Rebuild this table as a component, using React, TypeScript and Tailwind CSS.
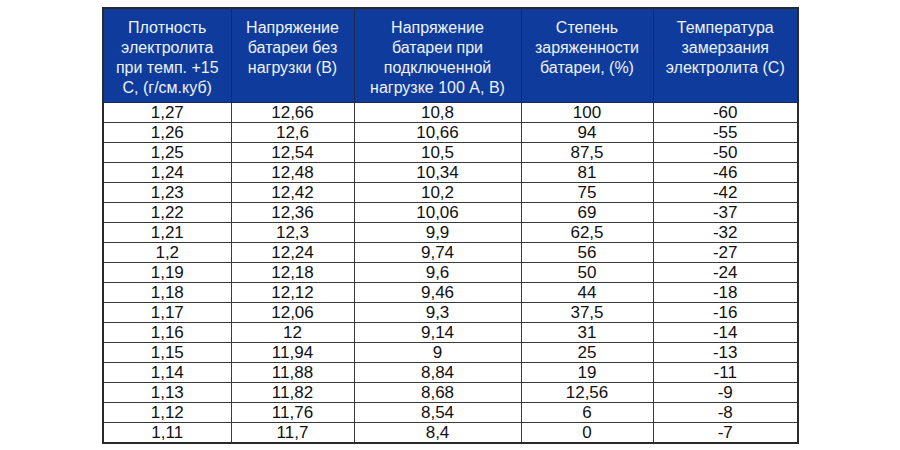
import React from "react";

const rows: string[][] = [
  ["1,27", "12,66", "10,8", "100", "-60"],
  ["1,26", "12,6", "10,66", "94", "-55"],
  ["1,25", "12,54", "10,5", "87,5", "-50"],
  ["1,24", "12,48", "10,34", "81", "-46"],
  ["1,23", "12,42", "10,2", "75", "-42"],
  ["1,22", "12,36", "10,06", "69", "-37"],
  ["1,21", "12,3", "9,9", "62,5", "-32"],
  ["1,2", "12,24", "9,74", "56", "-27"],
  ["1,19", "12,18", "9,6", "50", "-24"],
  ["1,18", "12,12", "9,46", "44", "-18"],
  ["1,17", "12,06", "9,3", "37,5", "-16"],
  ["1,16", "12", "9,14", "31", "-14"],
  ["1,15", "11,94", "9", "25", "-13"],
  ["1,14", "11,88", "8,84", "19", "-11"],
  ["1,13", "11,82", "8,68", "12,56", "-9"],
  ["1,12", "11,76", "8,54", "6", "-8"],
  ["1,11", "11,7", "8,4", "0", "-7"],
];

const headers: string[][] = [
  ["Плотность", "электролита", "при темп. +15", "С, (г/см.куб)"],
  ["Напряжение", "батареи без", "нагрузки (В)"],
  ["Напряжение", "батареи при", "подключенной", "нагрузке 100 А, В)"],
  ["Степень", "заряженности", "батареи, (%)"],
  ["Температура", "замерзания", "электролита (С)"],
];

export default function App() {
  return (
    <div className="w-[900px] h-[450px] bg-white pt-[7px]" style={{ fontFamily: '"Liberation Sans", Arial, sans-serif' }}>
      <table className="ml-[102px] w-[695px] table-fixed border-collapse border-2 border-[#2a2a2a]">
        <colgroup>
          <col className="w-[128px]" />
          <col className="w-[123px]" />
          <col className="w-[167px]" />
          <col className="w-[132px]" />
          <col className="w-[145px]" />
        </colgroup>
        <thead>
          <tr className="h-[94px] bg-[#0f3c9c]">
            {headers.map((h, i) => (
              <th
                key={i}
                className="align-top pt-[9px] px-1 text-[16px] leading-[20px] font-normal text-[#eef2fb] text-center border border-[#1b2a4f]"
              >
                {h.map((line, j) => (
                  <div key={j} className="whitespace-nowrap">{line}</div>
                ))}
              </th>
            ))}
          </tr>
        </thead>
        <tbody>
          {rows.map((r, i) => (
            <tr key={i} className="h-[20px]">
              {r.map((c, j) => (
                <td
                  key={j}
                  className="p-0 pt-[1px] text-center text-[17px] leading-[18px] text-[#111] border border-[#3a3a3a]"
                >
                  {c}
                </td>
              ))}
            </tr>
          ))}
        </tbody>
      </table>
    </div>
  );
}
